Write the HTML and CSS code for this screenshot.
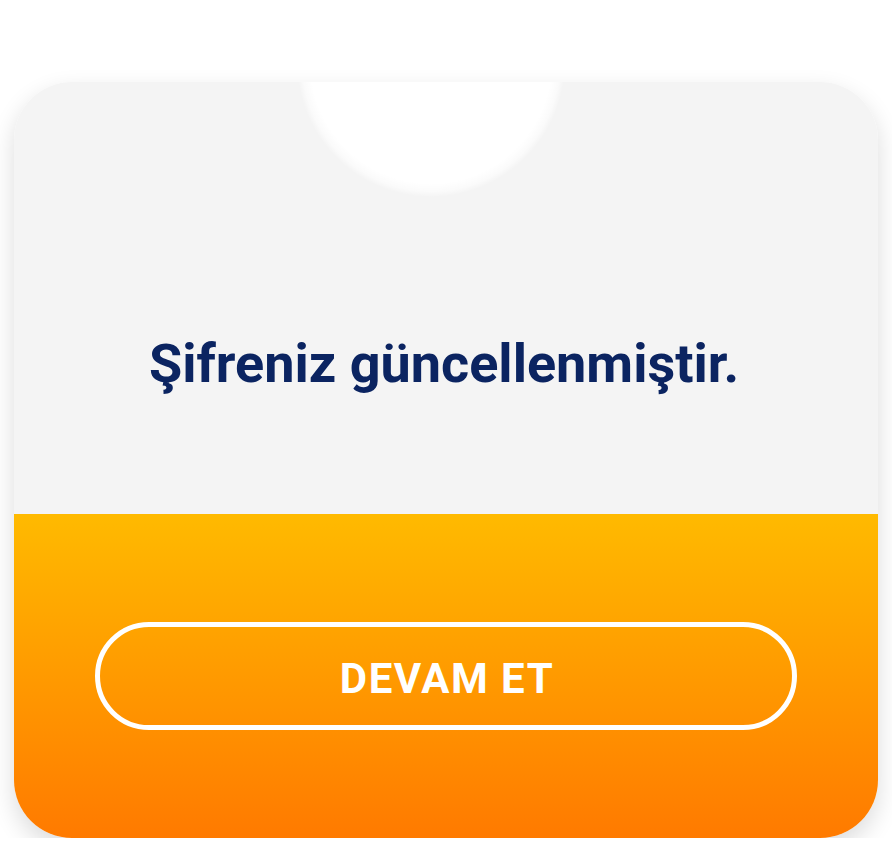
FILE: index.html
```html
<!DOCTYPE html>
<html lang="tr">
<head>
<meta charset="utf-8">
<title>Şifre güncellendi</title>
<link rel="stylesheet" href="styles.css">
</head>
<body>
<div class="page">
  <div class="card">
    <div class="notch"></div>
    <div class="card-top">
      <h1 class="title">Şifreniz güncellenmiştir.</h1>
    </div>
    <div class="card-bottom">
      <button class="btn">DEVAM ET</button>
    </div>
  </div>
</div>
</body>
</html>
```

FILE: styles.css
```css
html, body {
  margin: 0;
  padding: 0;
  background: #ffffff;
}
.page {
  padding: 82px 14px 0 14px;
  width: 864px;
}
.card {
  position: relative;
  width: 864px;
  height: 756px;
  border-radius: 58px;
  overflow: hidden;
  box-shadow: 0 10px 24px rgba(0, 0, 0, 0.14);
  display: flex;
  flex-direction: column;
}
.notch {
  position: absolute;
  left: 283px;
  top: -153px;
  width: 268px;
  height: 268px;
  border-radius: 50%;
  background: radial-gradient(circle closest-side, #ffffff 90%, rgba(255,255,255,0.6) 96%, rgba(255,255,255,0) 100%);
}
.card-top {
  height: 432px;
  box-sizing: border-box;
  background: #f4f4f4;
  padding: 250px 4px 0 0;
  text-align: center;
}
.title {
  margin: 0;
  font-family: Roboto, "Liberation Sans", sans-serif;
  font-weight: 700;
  font-size: 54px;
  line-height: 64px;
  color: #0b2461;
}
.card-bottom {
  flex: 1;
  background: linear-gradient(180deg, #ffba00 0%, #ff7a00 100%);
  display: flex;
  align-items: center;
  justify-content: center;
}
.btn {
  width: 702px;
  height: 108px;
  box-sizing: border-box;
  border: 5px solid #ffffff;
  border-radius: 54px;
  background: transparent;
  color: #ffffff;
  font-family: Roboto, "Liberation Sans", sans-serif;
  font-weight: 700;
  font-size: 42px;
  letter-spacing: 1.5px;
  padding: 5px 0 0 2px;
  cursor: pointer;
}
```
